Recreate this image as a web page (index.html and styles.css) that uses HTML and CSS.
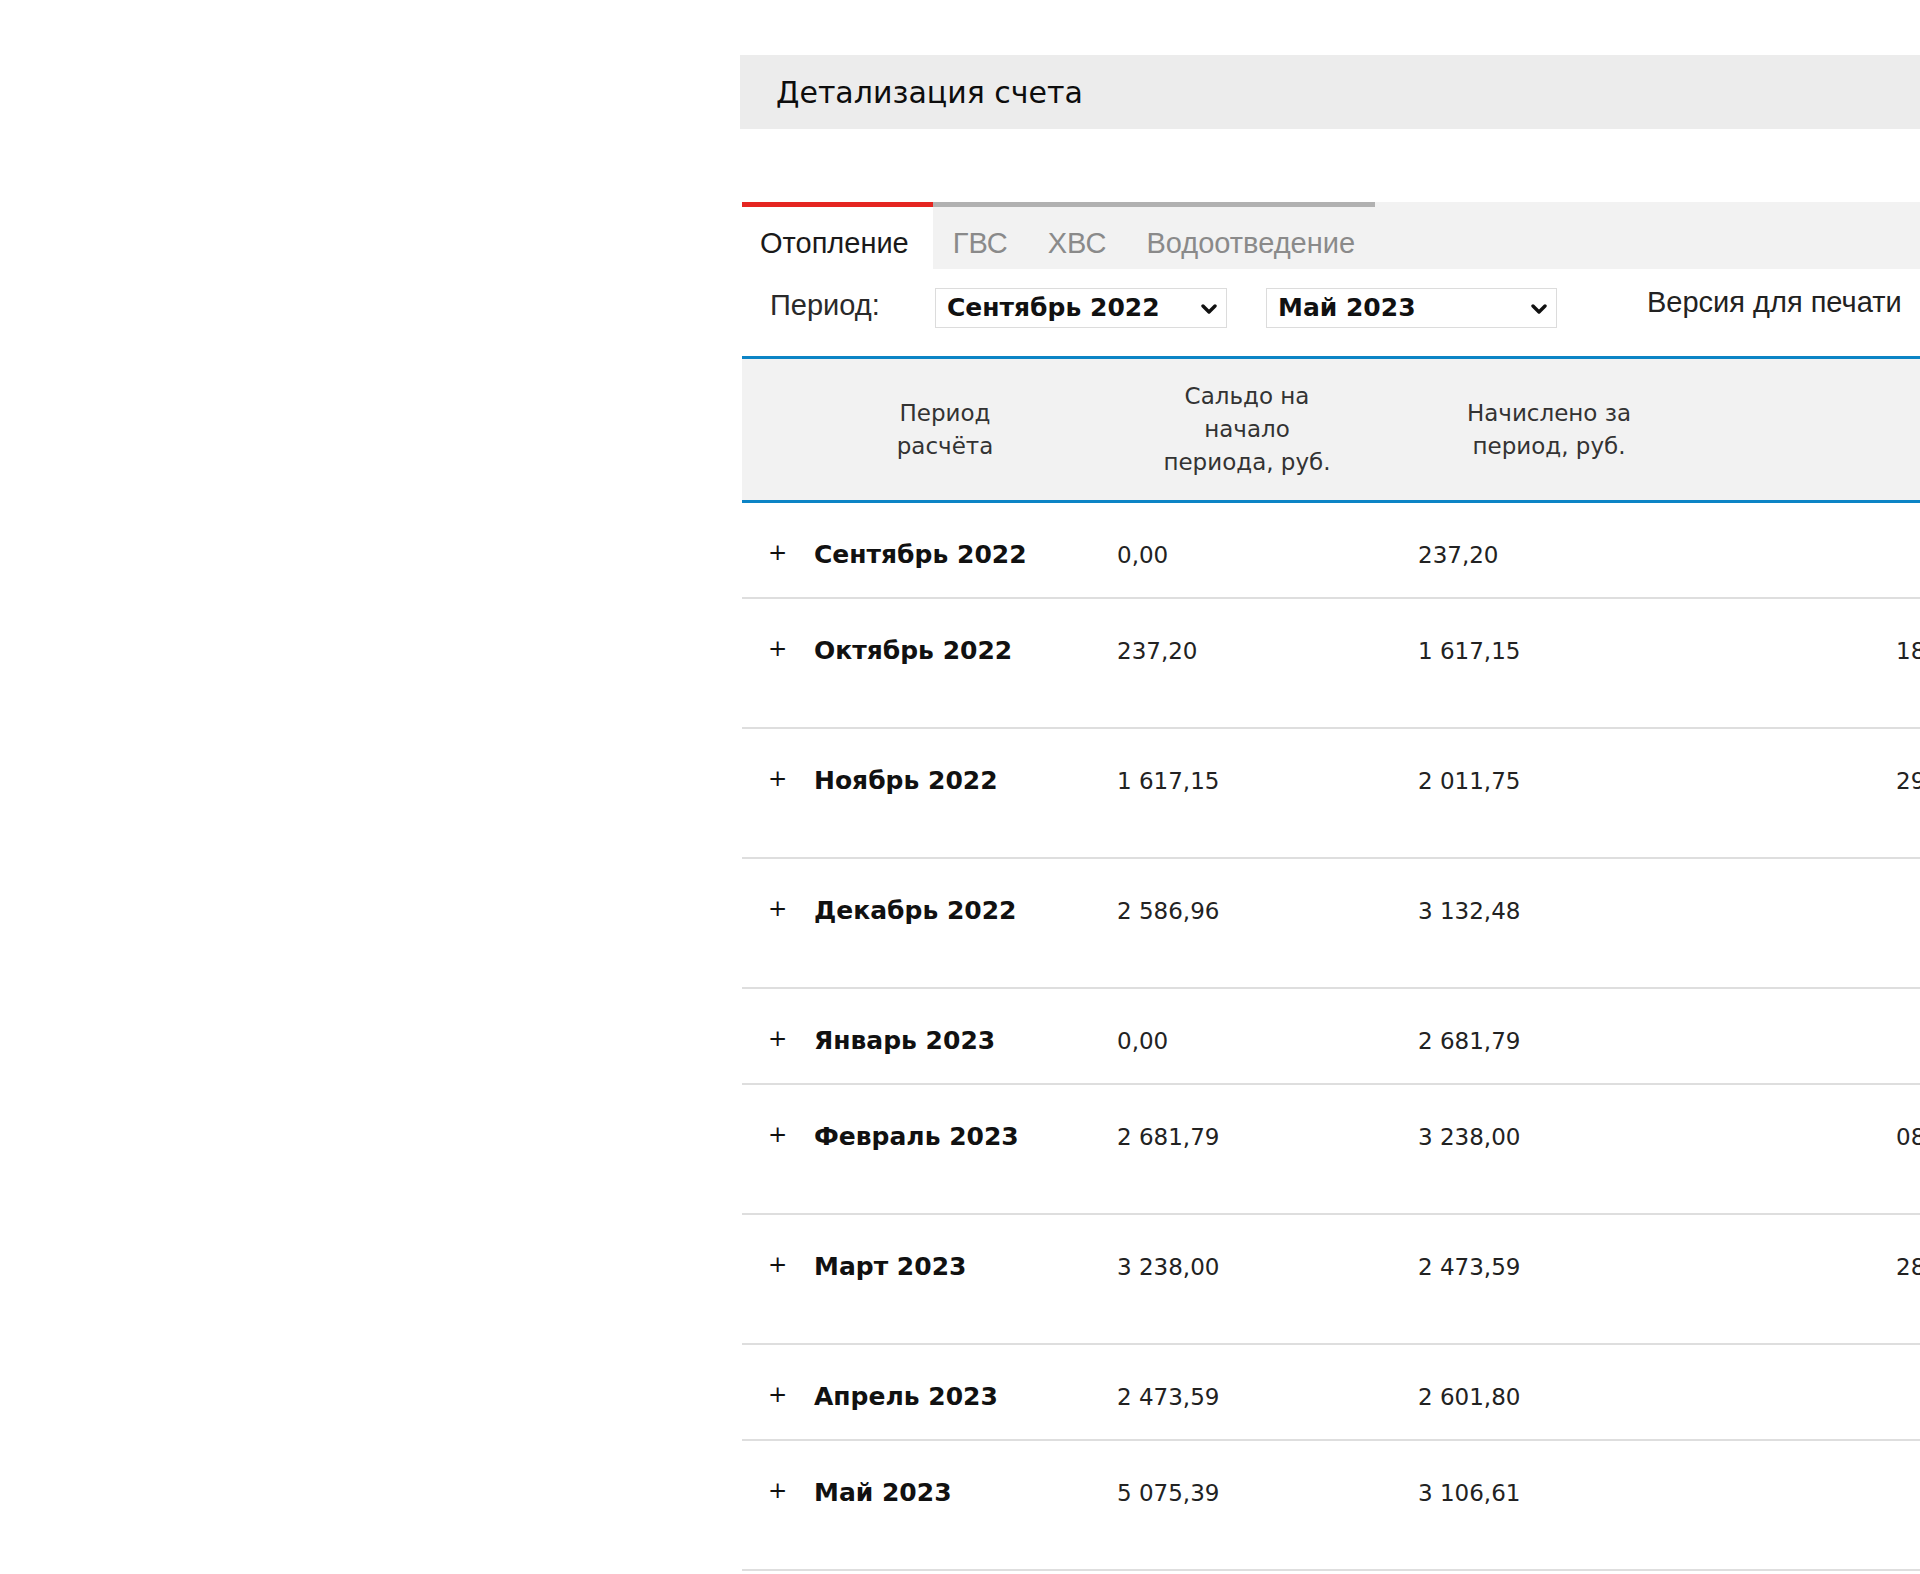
FILE: index.html
```html
<!DOCTYPE html>
<html lang="ru">
<head>
<meta charset="utf-8">
<title>Детализация счета</title>
<link rel="stylesheet" href="styles.css">
</head>
<body>
<div class="page">
  <div class="title-bar"><h1 class="title">Детализация счета</h1></div>

  <ul class="tabs">
    <li class="tab active">Отопление</li>
    <li class="tab">ГВС</li>
    <li class="tab">ХВС</li>
    <li class="tab">Водоотведение</li>
  </ul>

  <div class="filters">
    <span class="label">Период:</span>
    <div class="select select-from">
      <span class="select-value">Сентябрь 2022</span>
      <svg class="chev" width="16" height="11" viewBox="0 0 16 11"><polyline points="2,2 8,8 14,2" fill="none" stroke="#111" stroke-width="3.4" stroke-linecap="round" stroke-linejoin="round"/></svg>
    </div>
    <div class="select select-to">
      <span class="select-value">Май 2023</span>
      <svg class="chev" width="16" height="11" viewBox="0 0 16 11"><polyline points="2,2 8,8 14,2" fill="none" stroke="#111" stroke-width="3.4" stroke-linecap="round" stroke-linejoin="round"/></svg>
    </div>
    <a class="print">Версия для печати</a>
  </div>

  <div class="grid">
    <div class="row head">
      <div class="c c-plus"></div>
      <div class="c c-period">Период<br>расчёта</div>
      <div class="c c-saldo">Сальдо на<br>начало<br>периода, руб.</div>
      <div class="c c-charged">Начислено за<br>период, руб.</div>
      <div class="c c-paid">Дата оплаты</div>
    </div>

    <div class="row short">
      <div class="c c-plus">+</div>
      <div class="c c-period">Сентябрь 2022</div>
      <div class="c c-saldo">0,00</div>
      <div class="c c-charged">237,20</div>
      <div class="c c-paid"></div>
    </div>
    <div class="row tall">
      <div class="c c-plus">+</div>
      <div class="c c-period">Октябрь 2022</div>
      <div class="c c-saldo">237,20</div>
      <div class="c c-charged">1 617,15</div>
      <div class="c c-paid">18.11.2022</div>
    </div>
    <div class="row tall">
      <div class="c c-plus">+</div>
      <div class="c c-period">Ноябрь 2022</div>
      <div class="c c-saldo">1 617,15</div>
      <div class="c c-charged">2 011,75</div>
      <div class="c c-paid">29.12.2022</div>
    </div>
    <div class="row tall">
      <div class="c c-plus">+</div>
      <div class="c c-period">Декабрь 2022</div>
      <div class="c c-saldo">2 586,96</div>
      <div class="c c-charged">3 132,48</div>
      <div class="c c-paid"></div>
    </div>
    <div class="row short">
      <div class="c c-plus">+</div>
      <div class="c c-period">Январь 2023</div>
      <div class="c c-saldo">0,00</div>
      <div class="c c-charged">2 681,79</div>
      <div class="c c-paid"></div>
    </div>
    <div class="row tall">
      <div class="c c-plus">+</div>
      <div class="c c-period">Февраль 2023</div>
      <div class="c c-saldo">2 681,79</div>
      <div class="c c-charged">3 238,00</div>
      <div class="c c-paid">08.03.2023</div>
    </div>
    <div class="row tall">
      <div class="c c-plus">+</div>
      <div class="c c-period">Март 2023</div>
      <div class="c c-saldo">3 238,00</div>
      <div class="c c-charged">2 473,59</div>
      <div class="c c-paid">28.04.2023</div>
    </div>
    <div class="row short">
      <div class="c c-plus">+</div>
      <div class="c c-period">Апрель 2023</div>
      <div class="c c-saldo">2 473,59</div>
      <div class="c c-charged">2 601,80</div>
      <div class="c c-paid"></div>
    </div>
    <div class="row tall">
      <div class="c c-plus">+</div>
      <div class="c c-period">Май 2023</div>
      <div class="c c-saldo">5 075,39</div>
      <div class="c c-charged">3 106,61</div>
      <div class="c c-paid"></div>
    </div>
  </div>
</div>
</body>
</html>
```

FILE: styles.css
```css
html, body {
  margin: 0;
  padding: 0;
  overflow: hidden;
  background: #fff;
}

body {
  width: 1920px;
  height: 1574px;
  font-family: "DejaVu Sans", Verdana, sans-serif;
  color: #222;
}

.page {
  margin-left: 740px;
  padding-top: 55px;
  width: 1560px;
}

/* ---------- title ---------- */
.title-bar {
  height: 74px;
  background: #ececec;
  display: flex;
  align-items: center;
  padding-left: 36px;
}

.title {
  margin: 0;
  font-size: 30px;
  font-weight: normal;
  color: #0d0d0d;
}

/* ---------- tabs ---------- */
.tabs {
  list-style: none;
  margin: 73px 0 0 2px;
  padding: 0;
  display: flex;
  background: #f2f2f2;
}

.tab {
  border-top: 5px solid #b1b1b1;
  padding: 10px 20px 0 20px;
  height: 52px;
  line-height: 52px;
  font-family: "Liberation Sans", Arial, sans-serif;
  font-size: 29px;
  color: #8a8a8a;
}

.tab.active {
  border-top-color: #e52521;
  background: #fff;
  color: #1a1a1a;
  padding-left: 18px;
  padding-right: 24px;
}

/* ---------- filters ---------- */
.filters {
  margin-left: 2px;
  height: 87px;
  box-sizing: border-box;
  padding: 19px 0 0 28px;
  display: flex;
  align-items: flex-start;
}

.label {
  width: 165px;
  font-family: "Liberation Sans", Arial, sans-serif;
  font-size: 29px;
  line-height: 34px;
  color: #2a2a2a;
}

.select {
  box-sizing: border-box;
  height: 40px;
  border: 1px solid #dcdcdc;
  display: flex;
  align-items: center;
  justify-content: space-between;
  padding: 0 9px 0 11px;
  background: #fff;
}

.select-from {
  width: 292px;
}

.select-to {
  width: 291px;
  margin-left: 39px;
}

.select-value {
  font-weight: bold;
  font-size: 25px;
  line-height: 38px;
  color: #111;
}

.chev {
  display: block;
  margin-top: 2px;
}

.print {
  margin-left: 90px;
  font-family: "Liberation Sans", Arial, sans-serif;
  font-size: 29px;
  line-height: 28px;
  color: #222;
  white-space: nowrap;
}

/* ---------- grid table ---------- */
.grid {
  margin-left: 2px;
  width: 1552px;
  border-top: 3px solid #0c84c5;
}

.row {
  display: grid;
  grid-template-columns: 58px 290px 314px 290px 600px;
}

.row.head {
  height: 144px;
  box-sizing: border-box;
  background: #f2f2f2;
  border-bottom: 3px solid #0c84c5;
  align-items: center;
}

.head .c {
  text-align: center;
  font-size: 23px;
  line-height: 33px;
  color: #333;
}

.head .c-paid {
  text-align: left;
  padding-left: 260px;
}

.row.short,
.row.tall {
  box-sizing: border-box;
  border-bottom: 2px solid #dedede;
  align-items: start;
}

.row.short {
  height: 96px;
}

.row.tall {
  height: 130px;
}

.short .c,
.tall .c {
  padding-top: 37px;
  font-size: 23px;
  line-height: 30px;
  color: #222;
  white-space: nowrap;
}

.short .c-plus,
.tall .c-plus {
  padding-top: 34px;
  padding-left: 26px;
  color: #111;
}

.short .c-period,
.tall .c-period {
  padding-left: 14px;
  font-weight: bold;
  font-size: 25px;
  color: #111;
}

.short .c-saldo,
.tall .c-saldo {
  padding-left: 27px;
}

.short .c-charged,
.tall .c-charged {
  padding-left: 14px;
}

.short .c-paid,
.tall .c-paid {
  padding-left: 202px;
}
```
